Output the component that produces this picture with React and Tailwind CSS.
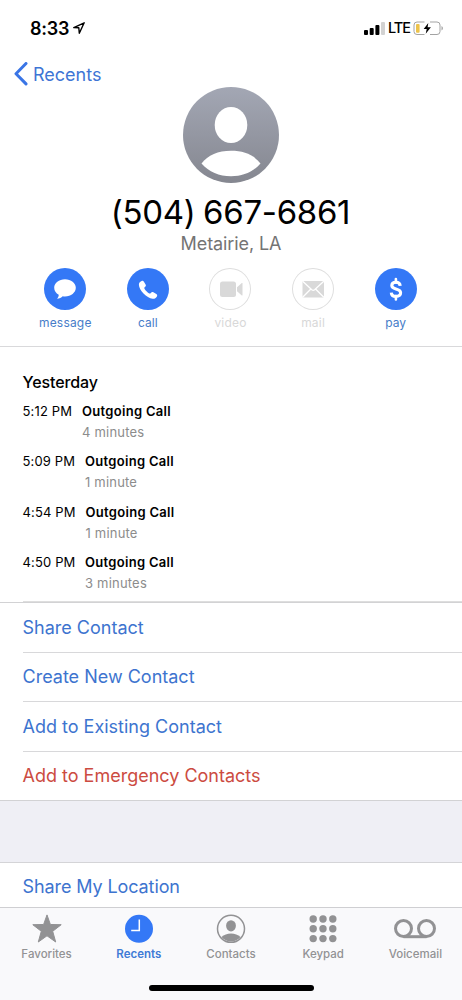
import React from 'react';
import clsx from 'clsx';

const actions = [
    { label: 'message', icon: <MessageIcon />, enabled: true, text: 'tracking-[0.2px]' },
    { label: 'call', icon: <PhoneIcon />, enabled: true, text: 'tracking-[0.1px]' },
    { label: 'video', icon: <VideoIcon />, enabled: false, text: 'tracking-[0.2px]' },
    { label: 'mail', icon: <MailIcon />, enabled: false, text: 'tracking-[0.2px]' },
    { label: 'pay', icon: <DollarIcon />, enabled: true, text: 'tracking-[0.1px]' },
];

const calls = [
    { time: '5:12 PM', type: 'Outgoing Call', duration: '4 minutes', width: 'w-[59.5px]' },
    { time: '5:09 PM', type: 'Outgoing Call', duration: '1 minute', width: 'w-[62.5px]' },
    { time: '4:54 PM', type: 'Outgoing Call', duration: '1 minute', width: 'w-[63px]' },
    { time: '4:50 PM', type: 'Outgoing Call', duration: '3 minutes', width: 'w-[62.5px]' },
];

const options = [
    { label: 'Share Contact', color: 'text-[#3d74cf]' },
    { label: 'Create New Contact', color: 'text-[#3d74cf]' },
    { label: 'Add to Existing Contact', color: 'text-[#3d74cf]' },
    { label: 'Add to Emergency Contacts', color: 'text-[#cc4b41]' },
];

const tabs = [
    { label: 'Favorites', icon: <StarIcon /> },
    { label: 'Recents', icon: <ClockIcon />, active: true },
    { label: 'Contacts', icon: <ContactIcon /> },
    { label: 'Keypad', icon: <KeypadIcon /> },
    { label: 'Voicemail', icon: <VoicemailIcon /> },
];

function MessageIcon() {
    return (
        <svg className="w-[42px] h-[42px]" viewBox="0 0 42 42" fill="currentColor">
            <path d="M21 11.2c-6 0-10.8 3.8-10.8 8.6 0 3 1.8 5.5 4.5 7 .1 1.4-.5 2.9-1.6 4 2.3 0 4.3-.9 5.6-2.5.8.1 1.5.2 2.3.2 6 0 10.8-3.9 10.8-8.7S27 11.2 21 11.2z" />
        </svg>
    );
}

function PhoneIcon() {
    return (
        <svg className="w-[42px] h-[42px]" viewBox="0 0 42 42" fill="currentColor">
            <path d="M14.6 13.1c.9-.6 1.7-.3 2.3.6l1.7 2.7c.5.9.4 1.6-.4 2.3l-.6.6c-.4.4-.4.8-.1 1.4 1.2 2 2.6 3.4 4.7 4.7.5.3 1 .3 1.4-.1l.6-.7c.6-.7 1.4-.8 2.2-.3l2.9 1.8c.9.6 1.2 1.4.6 2.3-1 1.7-2.5 2.5-4.2 2.3-3.2-.4-6.3-2.4-9.2-5.3-2.9-3-4.5-6.1-4.6-8.7 0-1.6.8-2.8 2.7-3.6z" />
        </svg>
    );
}

function VideoIcon() {
    return (
        <svg className="w-[42px] h-[42px]" viewBox="0 0 42 42" fill="currentColor">
            <rect x="11" y="13.5" width="16" height="15.5" rx="2.5" />
            <path d="M28 19.3l4.5-4.1c.5-.4 1-.2 1 .4v11.3c0 .6-.5.8-1 .4L28 23.2z" />
        </svg>
    );
}

function MailIcon() {
    return (
        <svg className="w-[42px] h-[42px]" viewBox="0 0 42 42">
            <rect x="10.5" y="13" width="21.5" height="16.5" rx="1" fill="currentColor" />
            <path d="M10.7 13.3L19.8 21.8Q21.2 23 22.6 21.8L31.8 13.3M10.7 29.3L18.6 21.2M31.8 29.3L23.8 21.2" fill="none" stroke="white" strokeWidth="1.3" />
        </svg>
    );
}

function DollarIcon() {
    return (
        <svg className="w-[42px] h-[42px]" viewBox="0 0 42 42" fill="none" stroke="currentColor" strokeWidth="3.1">
            <path d="M25.2 17.8c-.2-2.2-1.7-3.5-4.3-3.5-2.5 0-4.1 1.3-4.1 3.2 0 1.9 1.3 2.7 4.1 3.4 3.2.8 4.7 1.7 4.7 3.9s-1.8 3.6-4.7 3.6-4.5-1.5-4.6-3.8" />
            <path d="M20.9 11v3.5M20.9 28v3.5" strokeWidth="2.6" strokeLinecap="round" />
        </svg>
    );
}

function StarIcon() {
    return (
        <svg className="w-8 h-[30px]" viewBox="0 0 32 30" fill="currentColor" stroke="currentColor" strokeWidth="1" strokeLinejoin="round">
            <path d="M16 .9l3.4 9.6 10.8.2-8.5 6.6 3 10.7-8.7-6.2-8.7 6.200 3-10.700-8.500-6.600 10.800-.2z" />
        </svg>
    );
}

function ClockIcon() {
    return (
        <svg className="w-7 h-[30px]" viewBox="0 0 28 30">
            <circle cx="14" cy="14.8" r="14" fill="#3478f6" />
            <path d="M14.3 5.500v11H6.200" fill="none" stroke="white" strokeWidth="1.5" />
        </svg>
    );
}

function ContactIcon() {
    return (
        <svg className="w-[30px] h-[30px]" viewBox="0 0 30 30">
            <circle cx="15" cy="14.8" r="13.5" fill="none" stroke="currentColor" strokeWidth="1.5" />
            <ellipse cx="15" cy="11.8" rx="4.9" ry="5.6" fill="currentColor" />
            <path d="M5.5 23C8 20.6 11.2 19.4 15 19.4s7 1.2 9.5 3.6C22 26 18.8 27.4 15 27.4S8 26 5.5 23z" fill="currentColor" />
        </svg>
    );
}

function KeypadIcon() {
    return (
        <svg className="w-[30px] h-[30px]" viewBox="0 0 30 30" fill="currentColor">
            {[5, 14.8, 24.6].map((y) =>
                [5.2, 15, 24.8].map((x) => <circle key={`${x}-${y}`} cx={x} cy={y} r="3.7" />)
            )}
        </svg>
    );
}

function VoicemailIcon() {
    return (
        <svg className="w-[42px] h-[30px]" viewBox="0 0 42 30" fill="none" stroke="currentColor" strokeWidth="3">
            <circle cx="9.5" cy="14.5" r="8" />
            <circle cx="32.5" cy="14.5" r="8" />
            <path d="M9.5 22.7h23" />
        </svg>
    );
}

const StatusBar = () => (
    <div className="h-14 pl-[30px] pr-[19px] flex items-center justify-between text-black">
        <div className="flex items-center">
            <span className="w-[39px] text-[18px] font-semibold tracking-[-0.2px]">8:33</span>
            <svg className="ml-1 w-3 h-3" viewBox="0 0 12 12" fill="none" stroke="currentColor" strokeWidth="1.4" strokeLinejoin="round">
                <path d="M11.2.8L.8 5.600l5 .2.5 5.400z" />
            </svg>
        </div>
        <div className="flex items-center">
            <svg className="w-[21px] h-[13px]" viewBox="0 0 21 13" fill="currentColor">
                <rect x="0" y="8" width="4" height="5" rx="1" />
                <rect x="5.7" y="6" width="4" height="7" rx="1" />
                <rect x="11.4" y="3" width="4" height="10" rx="1" />
                <rect x="17" y="0" width="4" height="13" rx="1" fill="#d2d2d2" />
            </svg>
            <span className="ml-[3px] w-[22px] text-[14.5px] font-medium tracking-[-1px]">LTE</span>
            <svg className="ml-[3px] w-[30px] h-[15px]" viewBox="0 0 30 15">
                <path d="M11.5 1H4a3 3 0 0 0-3 3v6.500a3 3 0 0 0 3 3h7.500M17 1h7a3 3 0 0 1 3 3v6.500a3 3 0 0 1-3 3h-7" fill="none" stroke="#a3a3a3" />
                <rect x="3" y="3" width="3.6" height="8.7" rx="1" fill="#ecc34b" />
                <path d="M28.5 5v4.500c1-.4 1.400-1.200 1.400-2.200S29.500 5.400 28.500 5z" fill="#a3a3a3" />
                <path d="M15.3 2l-4.600 6h3l-1 4.700 5.200-6.400h-3.300z" fill="black" />
            </svg>
        </div>
    </div>
);

const App = () => {
    return (
        <div className="w-[462px] h-[1000px] overflow-hidden bg-white flex flex-col font-[Inter,'Liberation_Sans',sans-serif] text-black">
            <StatusBar />

            {/* Back navigation */}
            <div className="h-[31px] pt-[5px] pl-[14px] flex items-center text-[#3e75d5]">
                <svg className="w-[14px] h-6 shrink-0" viewBox="0 0 14 24" fill="none" stroke="#3a75e6" strokeWidth="3" strokeLinecap="round" strokeLinejoin="round">
                    <path d="M12 1.5L2 11.7l10 10.2" />
                </svg>
                <span className="ml-[5px] text-[18px]">Recents</span>
            </div>

            {/* Contact header */}
            <div className="h-[260px] border-b border-[#d9d9db] flex flex-col items-center">
                <svg className="w-24 h-24 shrink-0" viewBox="0 0 96 96">
                    <defs>
                        <linearGradient id="avatar" x1="0" y1="0" x2="0" y2="1">
                            <stop offset="0" stopColor="#a3a7b4" />
                            <stop offset="1" stopColor="#858790" />
                        </linearGradient>
                    </defs>
                    <circle cx="48" cy="48" r="48" fill="url(#avatar)" />
                    <ellipse cx="48" cy="38" rx="16.3" ry="18" fill="white" />
                    <path d="M18.5 76.5C25 68 35 63.8 48 63.8s23 4.2 29.5 12.7C70 85 60 89.3 48 89.3S26 85 18.500 76.500z" fill="white" />
                </svg>
                <h1 className="mt-[9px] mr-px h-10 leading-10 text-[33px] tracking-[-0.3px] [word-spacing:-1.5px] whitespace-nowrap">(504) 667-6861</h1>
                <p className="h-6 leading-6 text-[18px] tracking-[-0.1px] text-[#747474]">Metairie, LA</p>
                <div className="mt-3 mr-px w-[413px] grid grid-cols-5">
                    {actions.map(({ label, icon, enabled, text }) => (
                        <div key={label} className="flex flex-col items-center">
                            <div
                                className={clsx(
                                    'w-[42px] h-[42px] rounded-full flex items-center justify-center',
                                    enabled ? 'bg-[#3478f6] text-white' : 'text-[#d9d9d9] shadow-[inset_0_0_0_1px_#dedede]'
                                )}
                            >
                                {icon}
                            </div>
                            <span className={clsx('mt-[5px] text-[12px] leading-4', text, enabled ? 'text-[#477dc9]' : 'text-[#d8d8d8]')}>
                                {label}
                            </span>
                        </div>
                    ))}
                </div>
            </div>

            {/* Call history */}
            <div className="h-[255px] pt-[25px] pl-[22.5px] flex flex-col">
                <h2 className="h-5 shrink-0 leading-5 text-[16px] font-medium tracking-[-0.1px]">Yesterday</h2>
                <div className="pt-[9px] flex-1 min-h-0">
                    {calls.map(({ time, type, duration, width }) => (
                        <div key={time} className="h-[50.3px] flex text-[13px] leading-5">
                            <span className={clsx('shrink-0 tracking-[0.15px]', width)}>{time}</span>
                            <div>
                                <p className="font-semibold tracking-[0.3px]">{type}</p>
                                <p className="mt-px text-[#8c8c8c] tracking-[0.2px]">{duration}</p>
                            </div>
                        </div>
                    ))}
                </div>
                <div className="h-px shrink-0 bg-[#dedede]" />
            </div>

            {/* Contact options */}
            <div className="h-[199px] border-t border-b border-[#d2d2d4] flex flex-col">
                {options.map(({ label, color }, i) => (
                    <div key={label} className={clsx('ml-[22.5px] flex-1 flex items-center text-[18px]', color, i > 0 && 'border-t border-[#d8d8da]')}>
                        {label}
                    </div>
                ))}
            </div>
            <div className="h-[61px] bg-[#efeff5]" />
            <div className="h-[45px] pt-[3px] pl-[22.5px] border-t border-[#d4d4d7] flex items-center text-[18px] tracking-[-0.1px] text-[#3d74cf]">
                Share My Location
            </div>

            {/* Tab bar */}
            <div className="h-[93px] border-t border-[#cfcfd2] bg-[#f9f9fb] flex flex-col items-center">
                <div className="mt-[6px] w-[461px] grid grid-cols-5">
                    {tabs.map(({ label, icon, active }) => (
                        <div key={label} className={clsx('flex flex-col items-center', active ? 'text-[#3f7bd6]' : 'text-[#929294]')}>
                            {icon}
                            <span className={clsx('mt-[2px] text-[11.5px] leading-4', active ? 'font-semibold' : 'font-medium')}>{label}</span>
                        </div>
                    ))}
                </div>
                <div className="mt-[23px] w-[165px] h-[6px] rounded-full bg-black" />
            </div>
        </div>
    );
};

export default App;
